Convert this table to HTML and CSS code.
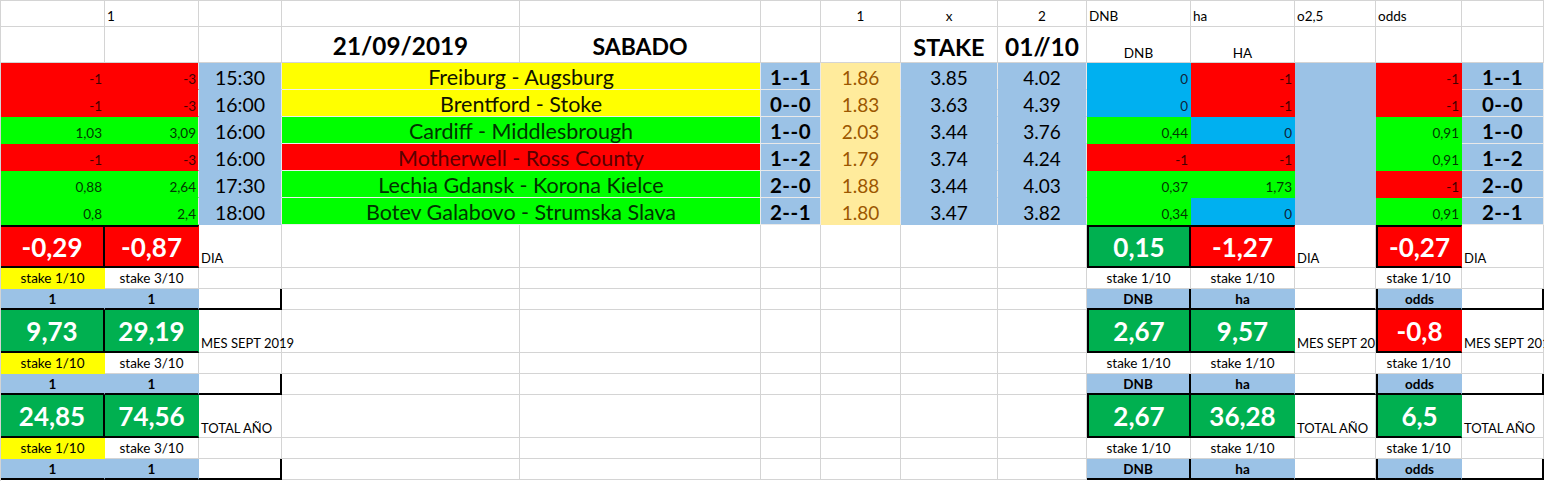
FILE: index.html
```html
<!DOCTYPE html>
<html lang="es">
<head>
<meta charset="utf-8">
<title>Apuestas 21/09/2019</title>
<link rel="stylesheet" href="styles.css">
</head>
<body>
<div class="sheet">
  <!-- row 1 -->
  <div class="c"></div>
  <div class="c l">1</div>
  <div class="c"></div>
  <div class="c"></div>
  <div class="c"></div>
  <div class="c"></div>
  <div class="c m">1</div>
  <div class="c m">x</div>
  <div class="c m">2</div>
  <div class="c l">DNB</div>
  <div class="c l">ha</div>
  <div class="c l">o2,5</div>
  <div class="c l">odds</div>
  <div class="c"></div>

  <!-- row 2 -->
  <div class="c"></div>
  <div class="c"></div>
  <div class="c"></div>
  <div class="c m ttl date">21/09/2019</div>
  <div class="c m ttl">SABADO</div>
  <div class="c"></div>
  <div class="c"></div>
  <div class="c m ttl2">STAKE</div>
  <div class="c m ttl2 frac">01//10</div>
  <div class="c m sub">DNB</div>
  <div class="c m sub">HA</div>
  <div class="c"></div>
  <div class="c"></div>
  <div class="c"></div>

  <!-- data rows -->
  <div class="c r red">-1</div>
  <div class="c r red eb">-3</div>
  <div class="c m blu tm">15:30</div>
  <div class="c m match yel">Freiburg - Augsburg</div>
  <div class="c m blu res">1--1</div>
  <div class="c m gold odd">1.86</div>
  <div class="c m blu odd">3.85</div>
  <div class="c m blu odd">4.02</div>
  <div class="c r cyan">0</div>
  <div class="c r red">-1</div>
  <div class="c blu ol"></div>
  <div class="c r red">-1</div>
  <div class="c m blu res">1--1</div>

  <div class="c r red">-1</div>
  <div class="c r red eb">-3</div>
  <div class="c m blu tm">16:00</div>
  <div class="c m match yel">Brentford - Stoke</div>
  <div class="c m blu res">0--0</div>
  <div class="c m gold odd">1.83</div>
  <div class="c m blu odd">3.63</div>
  <div class="c m blu odd">4.39</div>
  <div class="c r cyan">0</div>
  <div class="c r red">-1</div>
  <div class="c blu ol"></div>
  <div class="c r red">-1</div>
  <div class="c m blu res">0--0</div>

  <div class="c r grn">1,03</div>
  <div class="c r grn eb">3,09</div>
  <div class="c m blu tm">16:00</div>
  <div class="c m match grn">Cardiff - Middlesbrough</div>
  <div class="c m blu res">1--0</div>
  <div class="c m gold odd">2.03</div>
  <div class="c m blu odd">3.44</div>
  <div class="c m blu odd">3.76</div>
  <div class="c r grn">0,44</div>
  <div class="c r cyan">0</div>
  <div class="c blu ol"></div>
  <div class="c r grn">0,91</div>
  <div class="c m blu res">1--0</div>

  <div class="c r red">-1</div>
  <div class="c r red eb">-3</div>
  <div class="c m blu tm">16:00</div>
  <div class="c m match red">Motherwell - Ross County</div>
  <div class="c m blu res">1--2</div>
  <div class="c m gold odd">1.79</div>
  <div class="c m blu odd">3.74</div>
  <div class="c m blu odd">4.24</div>
  <div class="c r red">-1</div>
  <div class="c r red">-1</div>
  <div class="c blu ol"></div>
  <div class="c r grn">0,91</div>
  <div class="c m blu res">1--2</div>

  <div class="c r grn">0,88</div>
  <div class="c r grn eb">2,64</div>
  <div class="c m blu tm">17:30</div>
  <div class="c m match grn">Lechia Gdansk - Korona Kielce</div>
  <div class="c m blu res">2--0</div>
  <div class="c m gold odd">1.88</div>
  <div class="c m blu odd">3.44</div>
  <div class="c m blu odd">4.03</div>
  <div class="c r grn">0,37</div>
  <div class="c r grn">1,73</div>
  <div class="c blu ol"></div>
  <div class="c r red">-1</div>
  <div class="c m blu res">2--0</div>

  <div class="c r grn">0,8</div>
  <div class="c r grn eb">2,4</div>
  <div class="c m blu tm">18:00</div>
  <div class="c m match grn">Botev Galabovo - Strumska Slava</div>
  <div class="c m blu res">2--1</div>
  <div class="c m gold odd">1.80</div>
  <div class="c m blu odd">3.47</div>
  <div class="c m blu odd">3.82</div>
  <div class="c r grn">0,34</div>
  <div class="c r cyan">0</div>
  <div class="c blu ol"></div>
  <div class="c r grn">0,91</div>
  <div class="c m blu res">2--1</div>

  <!-- block 1: DIA -->
  <div class="c big red bt ba">-0,29</div>
  <div class="c big red bt bb">-0,87</div>
  <div class="c lbl">DIA</div>
  <div class="c"></div><div class="c"></div><div class="c"></div><div class="c"></div><div class="c"></div><div class="c"></div>
  <div class="c big dg bt bj">0,15</div>
  <div class="c big red bt bb">-1,27</div>
  <div class="c lbl">DIA</div>
  <div class="c big red bt bm">-0,27</div>
  <div class="c lbl">DIA</div>

  <div class="c m yel stk">stake 1/10</div>
  <div class="c m stk">stake 3/10</div>
  <div class="c"></div>
  <div class="c"></div><div class="c"></div><div class="c"></div><div class="c"></div><div class="c"></div><div class="c"></div>
  <div class="c m stk">stake 1/10</div>
  <div class="c m stk">stake 1/10</div>
  <div class="c"></div>
  <div class="c m stk">stake 1/10</div>
  <div class="c"></div>

  <div class="c m blu one kb">1</div>
  <div class="c m blu one kb">1</div>
  <div class="c kb kr"></div>
  <div class="c"></div><div class="c"></div><div class="c"></div><div class="c"></div><div class="c"></div><div class="c"></div>
  <div class="c m blu one kb kr">DNB</div>
  <div class="c m blu one kb">ha</div>
  <div class="c kb"></div>
  <div class="c m blu one kb kl">odds</div>
  <div class="c kb kr"></div>

  <!-- block 2: MES -->
  <div class="c big dg ba">9,73</div>
  <div class="c big dg bb">29,19</div>
  <div class="c lbl">MES SEPT 2019</div>
  <div class="c"></div><div class="c"></div><div class="c"></div><div class="c"></div><div class="c"></div><div class="c"></div>
  <div class="c big dg bj">2,67</div>
  <div class="c big dg bb">9,57</div>
  <div class="c lbl">MES SEPT 2019</div>
  <div class="c big red bm">-0,8</div>
  <div class="c lbl">MES SEPT 2019</div>

  <div class="c m yel stk">stake 1/10</div>
  <div class="c m stk">stake 3/10</div>
  <div class="c"></div>
  <div class="c"></div><div class="c"></div><div class="c"></div><div class="c"></div><div class="c"></div><div class="c"></div>
  <div class="c m stk">stake 1/10</div>
  <div class="c m stk">stake 1/10</div>
  <div class="c"></div>
  <div class="c m stk">stake 1/10</div>
  <div class="c"></div>

  <div class="c m blu one kb">1</div>
  <div class="c m blu one kb">1</div>
  <div class="c kb kr"></div>
  <div class="c"></div><div class="c"></div><div class="c"></div><div class="c"></div><div class="c"></div><div class="c"></div>
  <div class="c m blu one kb kr">DNB</div>
  <div class="c m blu one kb">ha</div>
  <div class="c kb"></div>
  <div class="c m blu one kb kl">odds</div>
  <div class="c kb kr"></div>

  <!-- block 3: TOTAL -->
  <div class="c big dg ba">24,85</div>
  <div class="c big dg bb">74,56</div>
  <div class="c lbl">TOTAL AÑO</div>
  <div class="c"></div><div class="c"></div><div class="c"></div><div class="c"></div><div class="c"></div><div class="c"></div>
  <div class="c big dg bj">2,67</div>
  <div class="c big dg bb">36,28</div>
  <div class="c lbl">TOTAL AÑO</div>
  <div class="c big dg bm">6,5</div>
  <div class="c lbl">TOTAL AÑO</div>

  <div class="c m yel stk">stake 1/10</div>
  <div class="c m stk">stake 3/10</div>
  <div class="c"></div>
  <div class="c"></div><div class="c"></div><div class="c"></div><div class="c"></div><div class="c"></div><div class="c"></div>
  <div class="c m stk">stake 1/10</div>
  <div class="c m stk">stake 1/10</div>
  <div class="c"></div>
  <div class="c m stk">stake 1/10</div>
  <div class="c"></div>

  <div class="c m blu one kb">1</div>
  <div class="c m blu one kb">1</div>
  <div class="c kb kr"></div>
  <div class="c"></div><div class="c"></div><div class="c"></div><div class="c"></div><div class="c"></div><div class="c"></div>
  <div class="c m blu one kb kr">DNB</div>
  <div class="c m blu one kb">ha</div>
  <div class="c kb"></div>
  <div class="c m blu one kb kl">odds</div>
  <div class="c kb kr"></div>
</div>
</body>
</html>
```

FILE: styles.css
```css
html, body {
  margin: 0;
  padding: 0;
  background: #ffffff;
  overflow: hidden;
}

.sheet {
  display: grid;
  grid-template-columns: 104px 94px 83px 238px 241px 60px 80px 97px 89px 104px 104px 81px 86px 82px;
  grid-template-rows: 26px 36px repeat(6, 27px) repeat(3, 43px 21px 21px);
  width: 1544px;
  height: 481px;
  box-sizing: border-box;
  border-top: 1px solid #d4d4d4;
  border-left: 1px solid #d4d4d4;
  overflow: hidden;
  font-family: Lato, "Liberation Sans", sans-serif;
  color: #000;
}

.c {
  box-sizing: border-box;
  border-right: 1px solid #d4d4d4;
  border-bottom: 1px solid #d4d4d4;
  display: flex;
  align-items: flex-end;
  justify-content: flex-start;
  white-space: nowrap;
  font-size: 13.5px;
  line-height: 1;
  padding: 0 2px 3px 2px;
  min-width: 0;
}

.l { justify-content: flex-start; }
.m { justify-content: center; }
.r { justify-content: flex-end; }

/* titles row */
.ttl {
  font-size: 23px;
  font-weight: bold;
  padding-bottom: 4px;
}
.ttl.date { font-size: 24.3px; }
.ttl2 {
  font-size: 23.5px;
  font-weight: bold;
  padding-bottom: 3px;
}
.ttl2.frac { font-size: 24.5px; }
.sub { padding-bottom: 2px; }

/* fills */
.red  { background: #ff0000; color: #420000; border-color: #ff0000; }
.grn  { background: #00ff00; color: #003800; border-color: #00ff00; }
.yel  { background: #ffff00; border-color: #ffff00; }
.cyan { background: #00b0f0; color: #10243a; border-color: #00b0f0; }
.blu  { background: #9bc2e6; border-color: #9bc2e6; }
.gold { background: #ffeb9c; color: #9c5700; border-color: #ffeb9c; }
.dg   { background: #00b050; }

/* data row details */
.eb { border-right-color: #e9e9e9; }
.tm {
  font-size: 19.5px;
  padding-bottom: 2px;
  border-right-color: #e9e9e9;
}
.match {
  grid-column: span 2;
  font-size: 21.5px;
  padding-bottom: 1px;
  border-right-color: #e9e9e9;
  border-bottom-color: #eeeeee;
}
.match.yel { color: #111100; }
.match.red { color: #5a0000; }
.match.grn { color: #003300; }
.res {
  font-size: 20.5px;
  font-weight: bold;
  letter-spacing: 0.5px;
  padding-bottom: 2px;
  border-right-color: #e9e9e9;
  border-bottom-color: #e9e9e9;
}
.odd {
  font-size: 19px;
  padding-bottom: 2px;
}
.odd.gold, .odd.blu { border-right-color: #e9e9e9; }
.ol { border-right-color: #9bc2e6; }

/* summary blocks */
.big {
  font-size: 26px;
  font-weight: bold;
  color: #ffffff;
  justify-content: center;
  align-items: center;
  padding: 0;
  border-bottom: 2px solid #000;
}
.bt { border-top: 2px solid #000; }
.ba { border-right: 2px solid #000; }
.bb { border-right-color: transparent; }
.bj { border-left: 2px solid #000; border-right: 2px solid #000; }
.bm { border-left: 2px solid #000; border-right-color: transparent; }

.lbl {
  font-size: 13px;
  padding-left: 2px;
  padding-bottom: 2px;
}
.stk { padding-bottom: 3px; }
.one {
  font-weight: bold;
  padding-bottom: 2px;
}
.kb { border-bottom: 2px solid #000; }
.kr { border-right: 2px solid #000; }
.kl { border-left: 2px solid #000; }
```
